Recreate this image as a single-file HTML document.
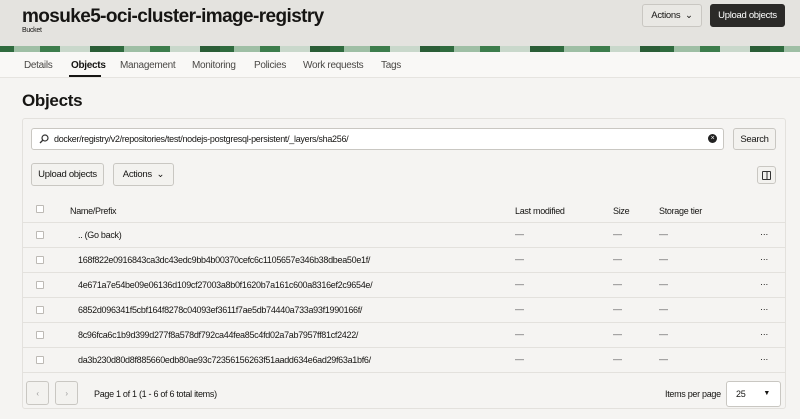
<!DOCTYPE html>
<html><head><meta charset="utf-8"><style>
*{box-sizing:border-box;margin:0;padding:0}
body{width:800px;height:419px;overflow:hidden;background:#f5f4f2;font-family:"Liberation Sans",sans-serif;color:#161513;position:relative;letter-spacing:-0.3px}
.abs{position:absolute}
.hdr{left:0;top:0;width:800px;height:47px;background:#e4e3df}
.ban{left:0;top:46px;width:800px;height:6px;background:repeating-linear-gradient(90deg,#2f6b3e 0 14px,#9fbfa5 14px 40px,#3d7d4c 40px 60px,#c9d8cb 60px 90px,#2b5e37 90px 110px);}
.tabs{left:0;top:52px;width:800px;height:26px;background:#f9f8f6;border-bottom:1px solid #e6e4e0}
.tab{position:absolute;top:8px;font-size:10px;color:#4a4845}
.btn{position:absolute;border:1px solid #c9c7c2;border-radius:3px;background:#f3f2ef;font-size:9.5px;display:flex;align-items:center;justify-content:center;white-space:nowrap}
.row{position:absolute;left:23px;width:762px;height:25px;border-top:1px solid #e3e1dd;font-size:9px}
.cb{position:absolute;left:13px;top:8px;width:8px;height:8px;border:1px solid #bdbab5;border-radius:1px;background:#fff}
.nm{position:absolute;left:55px;top:7px}
.d{position:absolute;top:6px;color:#555}
</style></head><body>
<div class="abs hdr"></div>
<div class="abs ban"></div>
<div class="abs" style="left:22px;top:6px;font-size:19px;font-weight:bold;letter-spacing:-0.6px">mosuke5-oci-cluster-image-registry</div>
<div class="abs" style="left:22px;top:27px;font-size:7px">Bucket</div>
<div class="btn" style="left:642px;top:4px;width:60px;height:23px;background:#e9e8e4">Actions &nbsp;⌄</div>
<div class="btn" style="left:710px;top:4px;width:75px;height:23px;background:#2b2a28;color:#fff;border-color:#2b2a28">Upload objects</div>
<div class="abs tabs">
<span class="tab" style="left:24px">Details</span>
<span class="tab" style="left:71px;color:#161513;font-weight:bold">Objects</span>
<div class="abs" style="left:69px;top:23px;width:32px;height:2px;background:#161513"></div>
<span class="tab" style="left:120px">Management</span>
<span class="tab" style="left:192px">Monitoring</span>
<span class="tab" style="left:254px">Policies</span>
<span class="tab" style="left:303px">Work requests</span>
<span class="tab" style="left:381px">Tags</span>
</div>
<div class="abs" style="left:22px;top:91px;font-size:17px;font-weight:bold">Objects</div>
<div class="abs" style="left:22px;top:118px;width:764px;height:291px;border:1px solid #e3e1dd;border-radius:3px"></div>
<div class="abs" style="left:31px;top:128px;width:693px;height:22px;background:#fff;border:1px solid #c9c7c2;border-radius:3px;font-size:9px;padding:5px 0 0 22px">docker/registry/v2/repositories/test/nodejs-postgresql-persistent/_layers/sha256/
<svg class="abs" style="left:7px;top:5px" width="10" height="10" viewBox="0 0 10 10"><circle cx="6" cy="4" r="3" fill="none" stroke="#333" stroke-width="1.2"/><path d="M4 6L1 9" stroke="#333" stroke-width="1.3"/></svg>
<span class="abs" style="right:6px;top:5px;width:9px;height:9px;border-radius:50%;background:#222;color:#fff;font-size:7px;line-height:9px;text-align:center">×</span></div>
<div class="btn" style="left:733px;top:128px;width:43px;height:22px">Search</div>
<div class="btn" style="left:31px;top:163px;width:73px;height:23px">Upload objects</div>
<div class="btn" style="left:113px;top:163px;width:61px;height:23px">Actions &nbsp;⌄</div>
<div class="btn" style="left:757px;top:166px;width:19px;height:18px"><div style="width:9px;height:9px;border:1px solid #333;border-radius:1px;background:linear-gradient(90deg,transparent 3.5px,#333 3.5px 4.5px,transparent 4.5px)"></div></div>
<div class="row" style="top:197px;border-top:none"><div class="cb" style="top:8px"></div><span class="nm" style="left:47px;top:9px">Name/Prefix</span><span class="d" style="left:492px;top:9px;color:#161513">Last modified</span><span class="d" style="left:590px;top:9px;color:#161513">Size</span><span class="d" style="left:636px;top:9px;color:#161513">Storage tier</span></div>
<div class="row" style="top:222px"><div class="cb"></div><span class="nm">.. (Go back)</span><span class="d" style="left:492px">—</span><span class="d" style="left:590px">—</span><span class="d" style="left:636px">—</span><span class="d" style="left:737px;color:#161513">···</span></div>
<div class="row" style="top:247px"><div class="cb"></div><span class="nm">168f822e0916843ca3dc43edc9bb4b00370cefc6c1105657e346b38dbea50e1f/</span><span class="d" style="left:492px">—</span><span class="d" style="left:590px">—</span><span class="d" style="left:636px">—</span><span class="d" style="left:737px;color:#161513">···</span></div>
<div class="row" style="top:272px"><div class="cb"></div><span class="nm">4e671a7e54be09e06136d109cf27003a8b0f1620b7a161c600a8316ef2c9654e/</span><span class="d" style="left:492px">—</span><span class="d" style="left:590px">—</span><span class="d" style="left:636px">—</span><span class="d" style="left:737px;color:#161513">···</span></div>
<div class="row" style="top:297px"><div class="cb"></div><span class="nm">6852d096341f5cbf164f8278c04093ef3611f7ae5db74440a733a93f1990166f/</span><span class="d" style="left:492px">—</span><span class="d" style="left:590px">—</span><span class="d" style="left:636px">—</span><span class="d" style="left:737px;color:#161513">···</span></div>
<div class="row" style="top:322px"><div class="cb"></div><span class="nm">8c96fca6c1b9d399d277f8a578df792ca44fea85c4fd02a7ab7957ff81cf2422/</span><span class="d" style="left:492px">—</span><span class="d" style="left:590px">—</span><span class="d" style="left:636px">—</span><span class="d" style="left:737px;color:#161513">···</span></div>
<div class="row" style="top:347px"><div class="cb"></div><span class="nm">da3b230d80d8f885660edb80ae93c72356156263f51aadd634e6ad29f63a1bf6/</span><span class="d" style="left:492px">—</span><span class="d" style="left:590px">—</span><span class="d" style="left:636px">—</span><span class="d" style="left:737px;color:#161513">···</span></div>
<div class="row" style="top:372px"></div>
<div class="btn" style="left:26px;top:381px;width:23px;height:24px;color:#999;font-size:8px">‹</div>
<div class="btn" style="left:55px;top:381px;width:23px;height:24px;color:#999;font-size:8px">›</div>
<div class="abs" style="left:94px;top:389px;font-size:9px">Page 1 of 1 (1 - 6 of 6 total items)</div>
<div class="abs" style="left:665px;top:389px;font-size:9px">Items per page</div>
<div class="abs" style="left:726px;top:381px;width:55px;height:26px;background:#fff;border:1px solid #c9c7c2;border-radius:3px;font-size:9px;padding:7px 0 0 9px">25<span class="abs" style="right:10px;top:8px;font-size:7px">▼</span></div>
</body></html>
